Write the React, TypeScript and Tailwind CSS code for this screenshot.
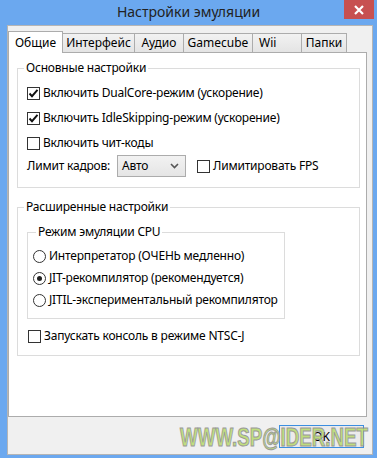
import React from "react";

function Check({ checked }: { checked?: boolean }) {
  return (
    <div className="w-[13px] h-[13px] border border-[#333333] bg-white flex items-center justify-center shrink-0">
      {checked && (
        <svg width="11" height="11" viewBox="0 0 11 11">
          <path d="M1.5 5.5 L4 8.2 L9.5 1.8" fill="none" stroke="#111" strokeWidth="1.9" />
        </svg>
      )}
    </div>
  );
}

function Radio({ checked }: { checked?: boolean }) {
  return (
    <div className="w-[13px] h-[13px] rounded-full border border-[#333333] bg-white flex items-center justify-center shrink-0">
      {checked && <div className="w-[5px] h-[5px] rounded-full bg-[#222222]" />}
    </div>
  );
}

function CheckRow({ checked, label }: { checked?: boolean; label: string }) {
  return (
    <div className="flex items-center h-[16px] gap-[3px]">
      <Check checked={checked} />
      <span className="leading-[16px] whitespace-nowrap">{label}</span>
    </div>
  );
}

function RadioRow({ checked, label }: { checked?: boolean; label: string }) {
  return (
    <div className="flex items-center h-[16px] gap-[3px]">
      <Radio checked={checked} />
      <span className="leading-[16px] whitespace-nowrap">{label}</span>
    </div>
  );
}

export default function App() {
  return (
    <div className="w-[377px] h-[458px] bg-[#6ba8ef] flex flex-col overflow-hidden relative font-['Noto_Sans','DejaVu_Sans',sans-serif] text-[12px] tracking-[-0.2px] text-black">
      {/* Title bar */}
      <div className="h-[25px] relative flex items-center justify-center shrink-0">
        <span className="text-[14px] tracking-normal text-[#222222] leading-[20px] -mt-[1px]">Настройки эмуляции</span>
        <div className="absolute right-[3px] top-0 w-[30px] h-[19px] bg-[#c75050] flex items-center justify-center">
          <svg width="10" height="10" viewBox="0 0 10 10">
            <path d="M1 1 L9 9 M9 1 L1 9" stroke="white" strokeWidth="2.2" />
          </svg>
        </div>
      </div>
      {/* Body */}
      <div className="flex-1 pl-[7px] pr-[4px] pb-[3px] flex">
        <div className="flex-1 bg-[#f0f0f0] border border-[#b5b5b5] flex flex-col pt-[5px]">
          {/* Tabs */}
          <div className="flex items-end h-[21px] relative z-10 tracking-normal">
            <div className="w-[55px] h-[22px] -mb-[1px] bg-white border border-b-0 border-[#acacac] flex items-center justify-center">
              Общие
            </div>
            <div className="w-[72px] h-[19px] border-t border-r border-[#acacac] bg-gradient-to-b from-[#f2f2f2] to-[#e4e4e4] flex items-center justify-center">
              Интерфейс
            </div>
            <div className="w-[49px] h-[19px] border-t border-r border-[#acacac] bg-gradient-to-b from-[#f2f2f2] to-[#e4e4e4] flex items-center justify-center">
              Аудио
            </div>
            <div className="w-[69px] h-[19px] border-t border-r border-[#acacac] bg-gradient-to-b from-[#f2f2f2] to-[#e4e4e4] flex items-center justify-center">
              Gamecube
            </div>
            <div className="w-[49px] h-[19px] border-t border-r border-[#acacac] bg-gradient-to-b from-[#f2f2f2] to-[#e4e4e4] flex items-center pl-[6px]">
              Wii
            </div>
            <div className="w-[45px] h-[19px] border-t border-r border-[#acacac] bg-gradient-to-b from-[#f2f2f2] to-[#e4e4e4] flex items-center justify-center">
              Папки
            </div>
          </div>
          {/* Panel */}
          <div className="w-[359px] h-[365px] bg-white border border-[#acacac] flex flex-col pl-[8px]">
            {/* Group 1 */}
            <fieldset className="w-[343px] mt-[7px] border border-[#dcdcdc] pl-[9px] pb-[10px]">
              <legend className="ml-[-3px] px-[2px] leading-[16px]">Основные настройки</legend>
              <div className="flex flex-col gap-[9px] pt-[9px]">
                <CheckRow checked label="Включить DualCore-режим (ускорение)" />
                <CheckRow checked label="Включить IdleSkipping-режим (ускорение)" />
                <CheckRow label="Включить чит-коды" />
              </div>
              <div className="flex items-center h-[22px] mt-[4px]">
                <span className="w-[90px] leading-[16px] whitespace-nowrap">Лимит кадров:</span>
                <div className="w-[69px] h-[22px] border border-[#acacac] bg-gradient-to-b from-[#f2f2f2] to-[#e5e5e5] flex items-center pl-[4px] pr-[6px] justify-between">
                  <span>Авто</span>
                  <svg width="9" height="6" viewBox="0 0 9 6">
                    <path d="M1 1 L4.5 4.5 L8 1" fill="none" stroke="#555" strokeWidth="1.6" />
                  </svg>
                </div>
                <div className="ml-[11px] flex items-center gap-[3px]">
                  <Check />
                  <span className="leading-[16px] whitespace-nowrap">Лимитировать FPS</span>
                </div>
              </div>
            </fieldset>
            {/* Group 2 */}
            <fieldset className="w-[343px] mt-[11px] border border-[#dcdcdc] pl-[9px] pb-[11px]">
              <legend className="ml-[-3px] px-[2px] leading-[16px]">Расширенные настройки</legend>
              <fieldset className="w-[258px] mt-[9px] border border-[#dcdcdc] pl-[5px] pb-[10px]">
                <legend className="ml-[3px] px-[2px] leading-[16px]">Режим эмуляции CPU</legend>
                <div className="flex flex-col gap-[6px] pt-[8px]">
                  <RadioRow label="Интерпретатор (ОЧЕНЬ медленно)" />
                  <RadioRow checked label="JIT-рекомпилятор (рекомендуется)" />
                  <RadioRow label="JITIL-экспериментальный рекомпилятор" />
                </div>
              </fieldset>
              <div className="mt-[9px] ml-[1px]">
                <CheckRow label="Запускать консоль в режиме NTSC-J" />
              </div>
            </fieldset>
          </div>
          {/* Buttons */}
          <div className="flex justify-end mt-[8px] pr-[8px]">
            <div className="w-[85px] h-[23px] border border-[#3c8ee0] bg-[#ebebeb] flex items-center justify-center tracking-normal">
              OK
            </div>
          </div>
        </div>
      </div>
      {/* Watermark */}
      <div className="absolute left-[180px] top-[425px] origin-left scale-x-[0.75] font-['Liberation_Sans',Arial,sans-serif] font-bold text-[25px] leading-[25px] tracking-normal text-[#b8db6c] opacity-85 [-webkit-text-stroke:1px_#8a8a8a] whitespace-nowrap pointer-events-none">
        WWW.SP@IDER.NET
      </div>
    </div>
  );
}
